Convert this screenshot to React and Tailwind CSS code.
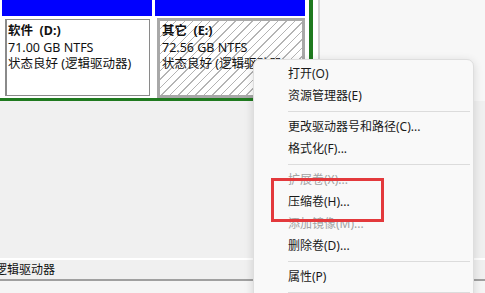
const MENU = [
  { label: '打开(O)' },
  { label: '资源管理器(E)' },
  { sep: true },
  { label: '更改驱动器号和路径(C)...' },
  { label: '格式化(F)...' },
  { sep: true },
  { label: '扩展卷(X)...', disabled: true },
  { label: '压缩卷(H)...' },
  { label: '添加镜像(M)...', disabled: true },
  { label: '删除卷(D)...' },
  { sep: true },
  { label: '属性(P)' },
  { sep: true },
]

function Partition({ name, size, status, selected }) {
  return (
    <div className="w-[150px] flex flex-col">
      <div className="h-[16px] bg-[#0000ff]" />
      {selected ? (
        <div className="mt-[2px] ml-[2px] h-[80px] border-[3px] border-[#a8a8a8] bg-[image:repeating-linear-gradient(135deg,#ffffff_0px,#ffffff_5px,#b4b4b4_5px,#b4b4b4_6px)] pl-[2px] pt-[2px] leading-[16.5px] text-[12.5px]">
          <div className="font-bold whitespace-pre">{name}</div>
          <div>{size}</div>
          <div className="whitespace-pre">{status}</div>
        </div>
      ) : (
        <div className="mt-[3px] ml-[3px] mr-[2px] h-[77px] border border-l-2 border-[#8a8a8a] bg-white pl-[1px] pt-[3px] leading-[16.5px] text-[12.5px]">
          <div className="font-bold whitespace-pre">{name}</div>
          <div>{size}</div>
          <div className="whitespace-pre">{status}</div>
        </div>
      )}
    </div>
  )
}

export default function App() {
  return (
    <div className="relative w-[485px] h-[293px] overflow-hidden bg-[#f0f0f0] text-[12px] text-[#111] font-['Noto_Sans','Noto_Sans_CJK_SC',sans-serif]">
      {/* disk strip */}
      <div className="flex h-[101px]">
        <div className="w-[320px] bg-white border-r-2 border-[#d4d4d4] flex">
          <div className="w-[313px] h-[101px] border-r-4 border-b-[3px] border-[#1f7a1f] flex pl-[2px] gap-[3px]">
            <Partition name="软件  (D:)" size="71.00 GB NTFS" status="状态良好 (逻辑驱动器)" />
            <Partition name="其它  (E:)" size="72.56 GB NTFS" status="状态良好 (逻辑驱动器)" selected />
          </div>
        </div>
        <div className="flex-1 bg-[#f7f7f7]" />
      </div>

      <div className="h-[157px]" />

      {/* legend */}
      <div className="border-t-2 border-white border-b-2 border-b-[#a0a0a0] h-[23px] flex items-center">
        <span className="ml-[-5px]">逻辑驱动器</span>
      </div>
      <div className="h-[12px] bg-[#f5f5f5]" />

      {/* context menu */}
      <div className="absolute left-[253px] top-[59px] w-[221px] h-[260px] rounded-[7px] border border-[#dedede] bg-[#f9f9f9] shadow-[0_2px_10px_rgba(0,0,0,0.14)] pt-[3px]">
        {MENU.map((item, i) =>
          item.sep ? (
            <div key={i} className="h-[9px] flex items-center pl-[34px] pr-[3px]">
              <div className="h-px w-full bg-[#dcdcdc]" />
            </div>
          ) : (
            <div
              key={i}
              className={`h-[22px] flex items-center pl-[34px] ${item.disabled ? 'text-[#a3a3a3]' : 'text-[#1a1a1a]'}`}
            >
              {item.label}
            </div>
          )
        )}
      </div>

      {/* highlight box */}
      <div className="absolute left-[271px] top-[178px] w-[113px] h-[44px] border-[3px] border-[#e3393c]" />
    </div>
  )
}
